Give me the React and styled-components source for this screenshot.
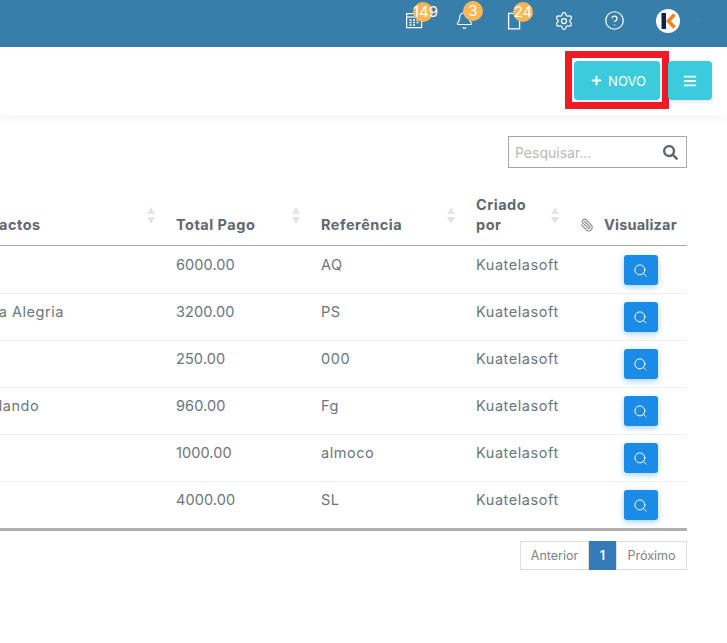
import React from 'react';
import styled, { createGlobalStyle } from 'styled-components';
import { Search, Paperclip, Settings, CircleHelp, ChevronDown, Bell } from 'lucide-react';
import { FaPlus, FaBars, FaSearch } from 'react-icons/fa';

const Global = createGlobalStyle`
  html, body { margin: 0; padding: 0; background: #fff; }
  body { font-family: "Inter", "Open Sans", sans-serif; color: #6c757d; overflow: hidden; }
`;

const COLUMNS = '216px 145px 155px 104px 24px 93px';

const Page = styled.div`
  width: 727px;
  height: 643px;
  overflow: hidden;
`;
const Topbar = styled.header`
  height: 47px;
  background: #377eab;
  display: flex;
  align-items: center;
  justify-content: flex-end;
  padding-right: 28px;
  box-sizing: border-box;
`;
const TopIcon = styled.div`
  position: relative;
  width: ${(p) => p.$w || 50}px;
  display: flex;
  justify-content: center;
  color: #fff;
  margin-top: -6px;
`;
const Badge = styled.span`
  position: absolute;
  left: 50%;
  margin-left: -1px;
  top: -10px;
  width: 20px;
  height: 20px;
  border-radius: 50%;
  background: #ffb552;
  color: #fff;
  font-size: 15px;
  font-weight: 400;
  line-height: 20px;
  text-align: center;
  white-space: nowrap;
`;
const Avatar = styled.svg`
  width: 24px;
  height: 24px;
  display: block;
`;
const Toolbar = styled.div`
  height: 68px;
  background: #fff;
  box-shadow: 0 2px 10px rgba(0, 0, 0, 0.05);
  display: flex;
  justify-content: flex-end;
  align-items: flex-start;
  padding: 14px 15px 0 0;
  box-sizing: border-box;
  gap: 8px;
`;
const ActionButton = styled.button`
  position: relative;
  height: 39px;
  width: ${(p) => p.$w}px;
  border: 0;
  border-radius: 4px;
  background: #3bcbdc;
  color: #fff;
  font-family: inherit;
  font-size: 13px;
  font-weight: 400;
  display: flex;
  align-items: center;
  justify-content: center;
  gap: 6px;
  padding: 0 0 0 ${(p) => p.$shift || 0}px;
  box-shadow: 0 2px 4px rgba(0, 0, 0, 0.1);
`;
const Highlight = styled.span`
  position: absolute;
  left: -9px;
  right: -9px;
  top: -10px;
  bottom: -9px;
  border: 7px solid #ed1c24;
  pointer-events: none;
`;
const Content = styled.main`
  padding: 21px 40px 0 0;
`;
const SearchRow = styled.div`
  display: flex;
  justify-content: flex-end;
`;
const SearchBox = styled.div`
  width: 179px;
  height: 32px;
  box-sizing: border-box;
  border: 1px solid #a6a6a6;
  display: flex;
  align-items: center;
  justify-content: space-between;
  padding: 0 8px 0 6px;
  font-size: 14px;
  color: #b9b9b9;
  svg { color: #5f6770; }
`;
const TableClip = styled.div`
  overflow: hidden;
  margin-top: 22px;
`;
const Table = styled.div`
  margin-left: -50px;
`;
const HeadRow = styled.div`
  display: grid;
  grid-template-columns: ${COLUMNS};
  height: 55px;
  border-bottom: 1px solid #aaa;
`;
const HeadCell = styled.div`
  position: relative;
  display: flex;
  align-items: flex-end;
  padding: 0 10px 10px ${(p) => p.$indent || 10}px;
  font-weight: 700;
  font-size: 14.5px;
  line-height: 20px;
  letter-spacing: ${(p) => (p.$tight ? 0.2 : 0.5)}px;
  color: #5f6770;
  white-space: nowrap;
`;
const WrapLabel = styled.span`
  width: 60px;
  white-space: normal;
`;
const ClipCell = styled.div`
  display: flex;
  align-items: flex-end;
  padding: 0 0 13px 10px;
  color: #868c92;
`;
const ClipIcon = styled(Paperclip)`
  flex-shrink: 0;
  transform: scaleX(-1);
`;
const SortMark = styled.span`
  position: absolute;
  right: 11px;
  top: 17px;
  display: flex;
  flex-direction: column;
  gap: 3px;
  &::before, &::after {
    content: '';
    width: 0;
    height: 0;
    border-left: 4px solid transparent;
    border-right: 4px solid transparent;
  }
  &::before { border-bottom: 7px solid #e4e4e4; }
  &::after { border-top: 7px solid #e4e4e4; }
`;
const Row = styled.div`
  display: grid;
  grid-template-columns: ${COLUMNS};
  height: ${(p) => (p.$last ? 49 : p.$first ? 48 : 47)}px;
  padding-top: ${(p) => (p.$first ? 1 : 0)}px;
  box-sizing: border-box;
  border-bottom: ${(p) => (p.$last ? '3px solid #b0b0b0' : '1px solid #f0f0f0')};
`;
const Cell = styled.div`
  padding: 8px 10px 0 ${(p) => p.$indent || 10}px;
  font-size: 14.5px;
  line-height: 19px;
  letter-spacing: ${(p) => (p.$tight ? 0.1 : 0.55)}px;
  color: #6c757d;
  white-space: nowrap;
`;
const ViewCell = styled.div`
  padding-top: 8px;
  display: flex;
  justify-content: center;
`;
const ViewButton = styled.button`
  width: 34px;
  height: 30px;
  border: 0;
  border-radius: 3px;
  padding: 0;
  background: #1a8be6;
  color: #fff;
  display: flex;
  align-items: center;
  justify-content: center;
  box-shadow: 0 2px 6px rgba(26, 139, 230, 0.4);
`;
const Pager = styled.div`
  display: flex;
  justify-content: flex-end;
  margin-top: 10px;
`;
const PageItem = styled.div`
  width: ${(p) => p.$w}px;
  height: 29px;
  box-sizing: border-box;
  display: flex;
  align-items: center;
  justify-content: center;
  font-size: 12.5px;
  color: ${(p) => (p.$active ? '#fff' : '#7d8389')};
  background: ${(p) => (p.$active ? '#337ab7' : '#fff')};
  border: 1px solid ${(p) => (p.$active ? '#337ab7' : '#ddd')};
  ${(p) => p.$active && 'font-weight: 600;'}
`;

const rows = [
  { name: '', total: '6000.00', ref: 'AQ' },
  { name: 'Maria Alegria', total: '3200.00', ref: 'PS' },
  { name: '', total: '250.00', ref: '000' },
  { name: 'Mirolando', total: '960.00', ref: 'Fg' },
  { name: '', total: '1000.00', ref: 'almoco' },
  { name: '', total: '4000.00', ref: 'SL' },
];

function CalendarIcon() {
  return (
    <svg width="18" height="17" viewBox="0 0 18 17" fill="none" stroke="currentColor" strokeWidth="1.2">
      <path d="M1.6 1.6h15v14h-15z" />
      <path d="M1.6 5h15" />
      <path d="M4.5 8h2M8 8h2M11.5 8h2M4.5 10.5h2M8 10.5h2M11.5 10.5h2M4.5 13h2M8 13h2" strokeWidth="1.5" />
    </svg>
  );
}

function DocIcon() {
  return (
    <svg width="18" height="18" viewBox="0 0 18 18" fill="none" stroke="currentColor" strokeWidth="1.3">
      <path d="M3.6 1.4h11v15.4h-11z" />
    </svg>
  );
}

export default function App() {
  return (
    <Page>
      <Global />
      <Topbar>
        <TopIcon>
          <CalendarIcon />
          <Badge>149</Badge>
        </TopIcon>
        <TopIcon>
          <Bell size={19} strokeWidth={1.4} />
          <Badge>3</Badge>
        </TopIcon>
        <TopIcon>
          <DocIcon />
          <Badge>24</Badge>
        </TopIcon>
        <TopIcon>
          <Settings size={20} strokeWidth={1.5} />
        </TopIcon>
        <TopIcon $w={50}>
          <CircleHelp size={21} strokeWidth={1.4} />
        </TopIcon>
        <TopIcon $w={58}>
          <Avatar viewBox="0 0 24 24">
            <circle cx="12" cy="12" r="12" fill="#fff" />
            <rect x="5.5" y="4" width="4.5" height="16" fill="#14204a" />
            <path d="M18.5 5.5 L12.5 12 L18.5 18.5" fill="none" stroke="#f58220" strokeWidth="3.6" />
          </Avatar>
        </TopIcon>
        <TopIcon $w={2}>
          <ChevronDown size={14} />
        </TopIcon>
      </Topbar>
      <Toolbar>
        <ActionButton $w={86} $shift={3}>
          <FaPlus size={11} />
          NOVO
          <Highlight />
        </ActionButton>
        <ActionButton $w={44}>
          <FaBars size={14} />
        </ActionButton>
      </Toolbar>
      <Content>
        <SearchRow>
          <SearchBox>
            Pesquisar...
            <FaSearch size={15} />
          </SearchBox>
        </SearchRow>
        <TableClip>
          <Table>
            <HeadRow>
              <HeadCell $indent={13}>Contactos<SortMark /></HeadCell>
              <HeadCell>Total Pago<SortMark /></HeadCell>
              <HeadCell>Referência<SortMark /></HeadCell>
              <HeadCell><WrapLabel>Criado por</WrapLabel><SortMark /></HeadCell>
              <ClipCell><ClipIcon size={14} /></ClipCell>
              <HeadCell $tight>Visualizar</HeadCell>
            </HeadRow>
            {rows.map((r, i) => (
              <Row key={i} $first={i === 0} $last={i === rows.length - 1}>
                <Cell $indent={16}>{r.name}</Cell>
                <Cell $tight>{r.total}</Cell>
                <Cell>{r.ref}</Cell>
                <Cell>Kuatelasoft</Cell>
                <Cell />
                <ViewCell>
                  <ViewButton><Search size={15} strokeWidth={1.6} /></ViewButton>
                </ViewCell>
              </Row>
            ))}
          </Table>
        </TableClip>
        <Pager>
          <PageItem $w={69}>Anterior</PageItem>
          <PageItem $w={27} $active>1</PageItem>
          <PageItem $w={71}>Próximo</PageItem>
        </Pager>
      </Content>
    </Page>
  );
}
